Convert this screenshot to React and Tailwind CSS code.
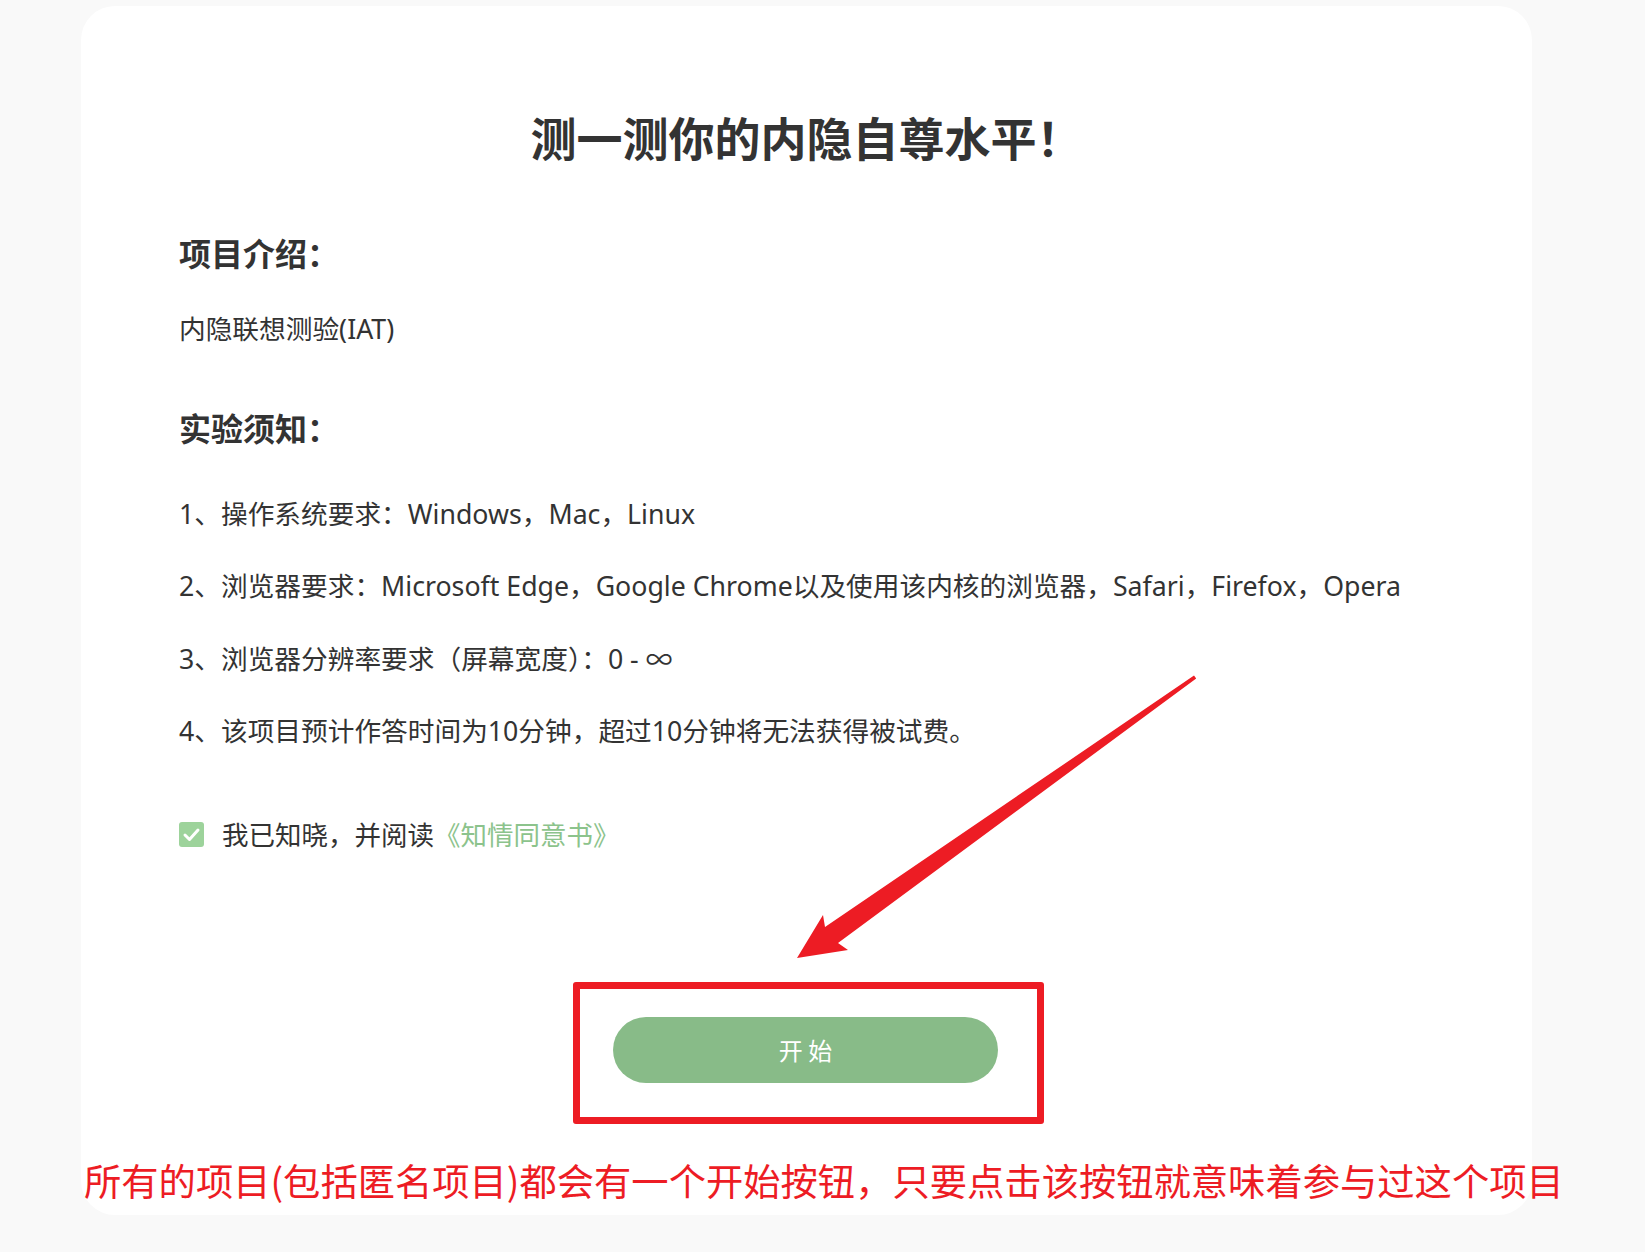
import React from "react";

export default function App() {
  const items = [
    "1、操作系统要求：Windows，Mac，Linux",
    "2、浏览器要求：Microsoft Edge，Google Chrome以及使用该内核的浏览器，Safari，Firefox，Opera",
    "3、浏览器分辨率要求（屏幕宽度）：0 - ∞",
    "4、该项目预计作答时间为10分钟，超过10分钟将无法获得被试费。",
  ];
  return (
    <div className="relative w-[1645px] h-[1252px] overflow-hidden bg-[#f9f9f9] font-['Noto_Sans_CJK_SC','Microsoft_YaHei',sans-serif] text-[#333]">
      <div className="pt-[6px] pl-[81px]">
        <div className="w-[1451px] h-[1209px] rounded-[34px] bg-white pt-[100px] pl-[98px] flex flex-col">
          <h1 className="text-center -ml-[98px] text-[46px] leading-[60px] font-bold">
            测一测你的内隐自尊水平！
          </h1>
          <h2 className="mt-[66px] text-[32px] leading-[40px] font-bold">项目介绍：</h2>
          <p className="mt-[39px] text-[26.7px] leading-[36px] font-['Noto_Sans','Noto_Sans_CJK_SC',sans-serif]">内隐联想测验(IAT)</p>
          <h2 className="mt-[60px] text-[32px] leading-[40px] font-bold">实验须知：</h2>
          <ul className="mt-[31px] flex flex-col font-['Noto_Sans','Noto_Sans_CJK_SC',sans-serif]">
            {items.map((t) => (
              <li key={t} className="text-[26.7px] leading-[72.3px] whitespace-nowrap">
                {t}
              </li>
            ))}
          </ul>
          <div className="mt-[49px] flex items-center h-[36px]">
            <span className="w-[25px] h-[25px] rounded-[3px] bg-[#9dd39b] flex items-center justify-center">
              <svg width="19" height="19" viewBox="0 0 19 19">
                <polyline points="3,10 7.5,14.5 16,5" fill="none" stroke="white" strokeWidth="3" strokeLinecap="round" strokeLinejoin="round" />
              </svg>
            </span>
            <span className="ml-[18px] text-[26.5px] leading-[36px]">
              我已知晓，并阅读<span className="text-[#8cc38c]">《知情同意书》</span>
            </span>
          </div>
          <div className="mt-[130px] ml-[394px] w-[471px] h-[142px] border-[7px] border-[#ed1c24] rounded-[3px] pt-[28px] pl-[33px]">
            <button className="w-[385px] h-[66px] rounded-full bg-[#88bb88] text-white text-[24px] leading-[66px]">
              开 始
            </button>
          </div>
          <p className="mt-[32px] -ml-[95px] whitespace-nowrap text-[37.3px] leading-[48px] text-[#ed1c24]">
            所有的项目(包括匿名项目)都会有一个开始按钮，只要点击该按钮就意味着参与过这个项目
          </p>
        </div>
      </div>
      <svg className="absolute inset-0 pointer-events-none" width="1645" height="1252" viewBox="0 0 1645 1252">
        <polygon
          points="1194,675.6 825,927 823,915 797,958 848,950 838,943 1196.2,678.4"
          fill="#ed1c24"
        />
      </svg>
    </div>
  );
}
